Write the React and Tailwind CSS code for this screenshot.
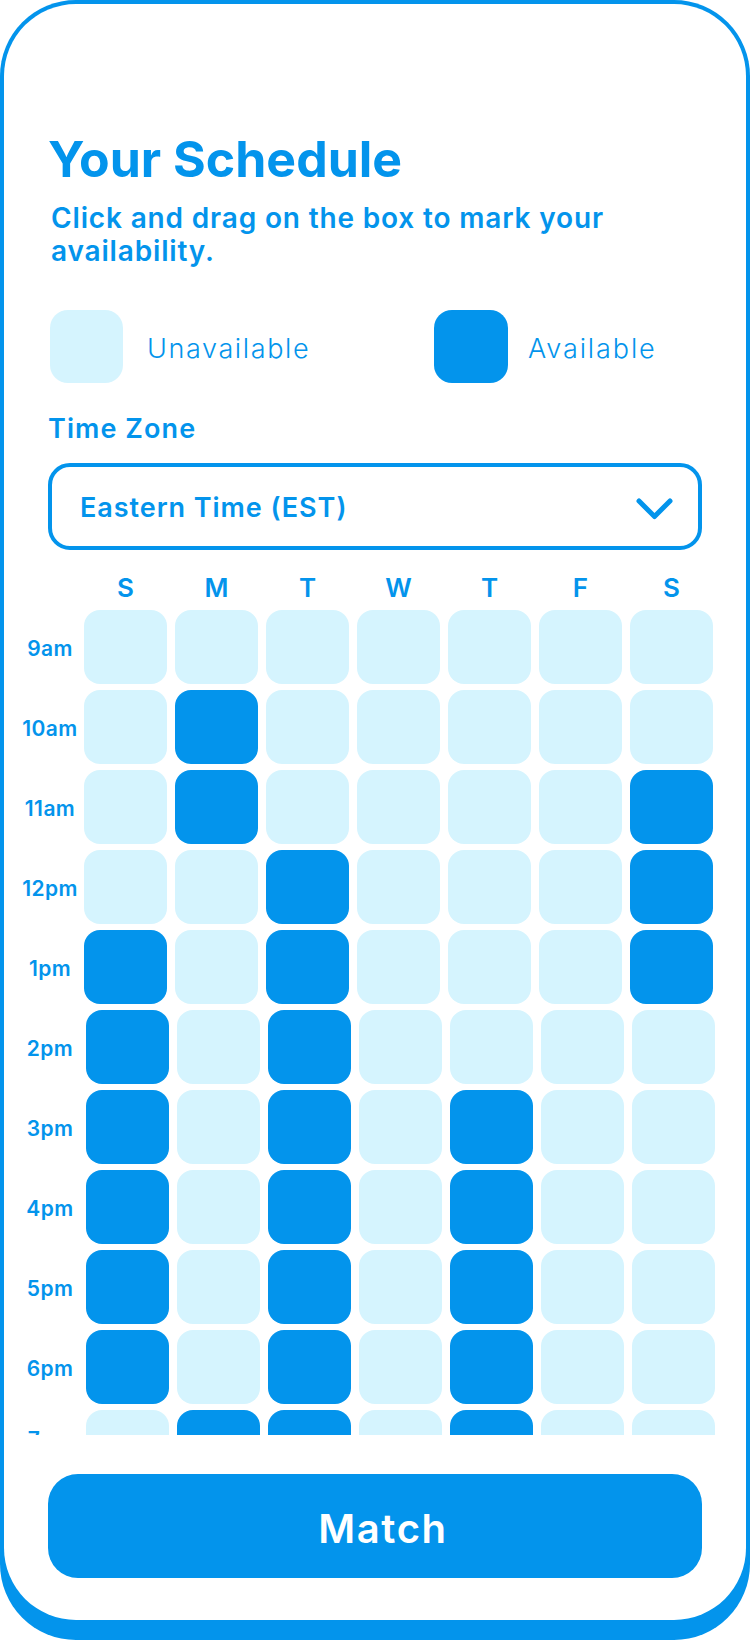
import React from 'react';

const days = ['S', 'M', 'T', 'W', 'T', 'F', 'S'];

// 1 = available, 0 = unavailable
const rows = [
  { label: '9am', slots: '0000000' },
  { label: '10am', slots: '0100000' },
  { label: '11am', slots: '0100001' },
  { label: '12pm', slots: '0010001' },
  { label: '1pm', slots: '1010001' },
  { label: '2pm', slots: '1010000', shift: true },
  { label: '3pm', slots: '1010100', shift: true },
  { label: '4pm', slots: '1010100', shift: true },
  { label: '5pm', slots: '1010100', shift: true },
  { label: '6pm', slots: '1010100', shift: true },
  { label: '7pm', slots: '0110100', shift: true, peek: true },
];

const App = () => {
  return (
    <div className="w-[750px] h-[1640px] bg-white font-['Inter',sans-serif] text-[#0394EC]">
      <div className="h-full rounded-[76px] bg-[#0394EC] px-[4px] pt-[4px] pb-[20px]">
        <div className="h-full rounded-[72px] bg-white flex flex-col">
          <div className="px-[44px] pt-[130px]">
            <h1 className="text-[50px] leading-[50px] font-bold">Your Schedule</h1>
            <p className="mt-[18px] max-w-[600px] text-[28px] leading-[33px] font-semibold tracking-[0.03em] pl-[3px]">
              Click and drag on the box to mark your availability.
            </p>

            {/* legend */}
            <div className="mt-[42px] flex items-center pl-[2px]">
              <div className="w-[384px] flex items-center gap-[24px]">
                <div className="w-[73px] h-[73px] rounded-[18px] bg-[#D5F4FE]" />
                <span className="pt-[6px] text-[27px] font-light tracking-[0.06em]">Unavailable</span>
              </div>
              <div className="flex items-center gap-[20px]">
                <div className="w-[74px] h-[73px] rounded-[18px] bg-[#0394EC]" />
                <span className="pt-[6px] text-[27px] font-light tracking-[0.07em]">Available</span>
              </div>
            </div>

            <p className="mt-[30px] text-[27px] leading-[32px] font-semibold tracking-[0.04em]">Time Zone</p>

            <div className="mt-[18px] h-[87px] border-4 border-[#0394EC] rounded-[22px] flex items-center justify-between pl-[28px] pr-[25px] pt-[4px]">
              <span className="text-[27px] font-semibold tracking-[0.035em]">Eastern Time (EST)</span>
              <svg width="37" height="22" viewBox="0 0 37 22" fill="none">
                <polyline points="3,3 18.5,18.5 34,3" stroke="#0394EC" strokeWidth="5" strokeLinecap="round" strokeLinejoin="round" />
              </svg>
            </div>
          </div>

          {/* schedule grid */}
          <div className="pl-[8px] mt-[22px]">
            <div className="flex">
              <div className="w-[72px]" />
              <div className="flex gap-[8px]">
                {days.map((d, i) => (
                  <div key={i} className="w-[83px] text-center text-[26px] leading-[32px] font-semibold">{d}</div>
                ))}
              </div>
            </div>

            <div className="mt-[6px] h-[825px] overflow-hidden flex flex-col gap-[6px]">
              {rows.map((row) => (
                <div key={row.label} className={row.peek ? 'flex items-start shrink-0' : 'flex items-center shrink-0'}>
                  <div className={row.peek ? 'w-[72px] pl-[4px] pt-[17px] text-center text-[21px] leading-[26px] font-semibold tracking-[0.02em]' : 'w-[72px] pl-[4px] pt-[3px] text-center text-[21px] font-semibold tracking-[0.02em]'}>
                    {row.label}
                  </div>
                  <div className={row.shift ? 'flex gap-[8px] pl-[2px]' : 'flex gap-[8px]'}>
                    {row.slots.split('').map((s, i) => (
                      <div
                        key={i}
                        className={s === '1' ? 'w-[83px] h-[74px] rounded-2xl bg-[#0394EC]' : 'w-[83px] h-[74px] rounded-2xl bg-[#D5F4FE]'}
                      />
                    ))}
                  </div>
                </div>
              ))}
            </div>
          </div>

          <div className="px-[44px] mt-[39px]">
            <button className="w-full h-[104px] rounded-[30px] bg-[#0394EC] text-white text-[40px] font-semibold tracking-[0.04em] pl-[16px] pt-[6px]">
              Match
            </button>
          </div>
        </div>
      </div>
    </div>
  );
};

export default App;
